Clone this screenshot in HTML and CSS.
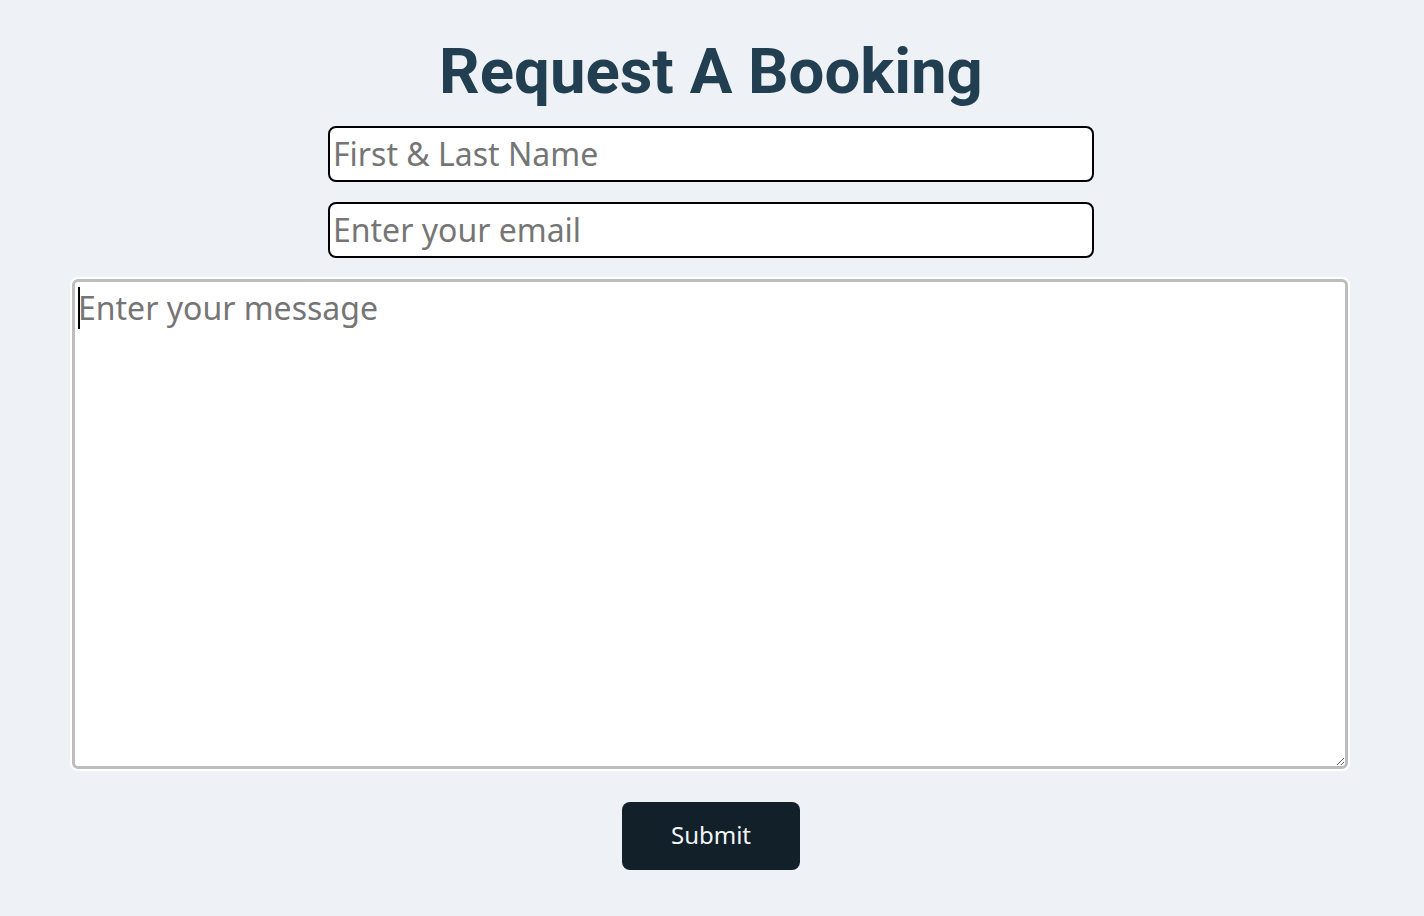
FILE: index.html
```html
<!DOCTYPE html>
<html lang="en">
<head>
<meta charset="utf-8">
<title>Request A Booking</title>
<link rel="stylesheet" href="styles.css">
</head>
<body>
<main class="page">
  <h1 class="title">Request A Booking</h1>
  <form class="booking-form" onsubmit="return false">
    <input class="field" type="text" placeholder="First &amp; Last Name">
    <input class="field" type="email" placeholder="Enter your email">
    <div class="message-wrap">
      <textarea class="message" placeholder="Enter your message" autofocus></textarea>
      <span class="caret"></span>
    </div>
    <button class="submit" type="submit">Submit</button>
  </form>
</main>
</body>
</html>
```

FILE: styles.css
```css
html, body {
  margin: 0;
  padding: 0;
  background: #eef2f7;
}

.page {
  display: flex;
  flex-direction: column;
  align-items: center;
  padding-top: 34px;
  padding-right: 2px;
}

.title {
  margin: 0 0 17px;
  font-family: Roboto, "Liberation Sans", sans-serif;
  font-weight: 700;
  font-size: 63.5px;
  line-height: 75px;
  color: #213f50;
}

.booking-form {
  display: flex;
  flex-direction: column;
  align-items: center;
  gap: 20px;
}

.field {
  box-sizing: border-box;
  width: 766px;
  height: 56px;
  margin: 0;
  padding: 0 2px 2px 3px;
  border: 2px solid #000;
  border-radius: 8px;
  background: #fff;
  font-family: "Noto Sans", "Open Sans", sans-serif;
  font-size: 32px;
  color: #222;
}

.field::placeholder,
.message::placeholder {
  color: #757575;
  opacity: 1;
}

.message-wrap {
  position: relative;
  display: flex;
  margin: 1px 2px 0 0;
}

.message {
  box-sizing: border-box;
  width: 1276px;
  height: 490px;
  margin: 0;
  padding: 4px 2px 2px 3px;
  border: 3px solid #bdbdbd;
  border-radius: 6px;
  background: #fff;
  box-shadow: 0 0 0 2px #fff;
  font-family: "Noto Sans", "Open Sans", sans-serif;
  font-size: 32px;
  color: #222;
  caret-color: transparent;
}

.message:focus {
  outline: none;
}

.caret {
  position: absolute;
  left: 6px;
  top: 8px;
  width: 2px;
  height: 42px;
  background: #000;
  pointer-events: none;
}

.submit {
  box-sizing: border-box;
  width: 178px;
  height: 68px;
  margin-top: 13px;
  padding: 0 0 3px;
  border: 0;
  border-radius: 8px;
  background: #12202a;
  color: #f2f5f8;
  font-family: "Noto Sans", "Open Sans", sans-serif;
  font-size: 24px;
  cursor: pointer;
}
```
